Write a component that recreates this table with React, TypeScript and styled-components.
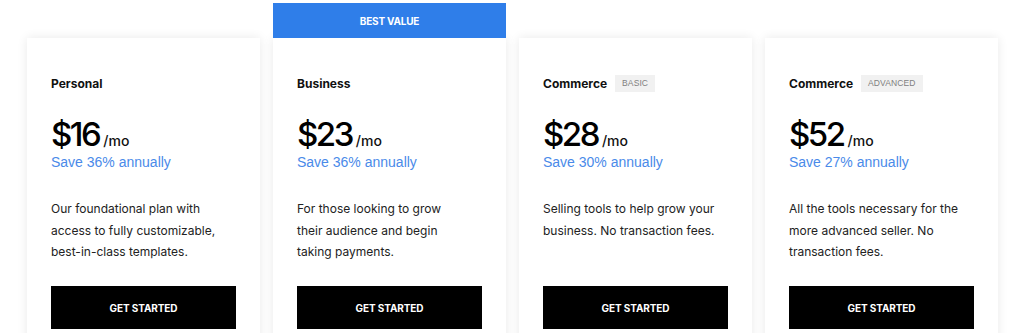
import React from "react";
import styled, { createGlobalStyle } from "styled-components";

const Global = createGlobalStyle`
  html, body { margin: 0; padding: 0; background: #fff; overflow: hidden; }
  body { font-family: Inter, "Liberation Sans", Arial, sans-serif; color: #111; }
`;

const Row = styled.div`
  display: flex;
  gap: 13px;
  padding: 38px 0 0 27px;
  height: 333px;
  box-sizing: border-box;
  overflow: hidden;
`;

const Card = styled.div`
  position: relative;
  width: 233px;
  height: 320px;
  flex: none;
  background: #fff;
  box-shadow: 0 0 10px rgba(0, 0, 0, 0.09);
  padding: 37px 24px 0;
  box-sizing: border-box;
  display: flex;
  flex-direction: column;
`;

const Ribbon = styled.div`
  position: absolute;
  left: 0;
  right: 0;
  bottom: 100%;
  height: 35px;
  background: #2f7ee9;
  color: #fff;
  font-size: 10px;
  font-weight: 700;
  display: flex;
  align-items: center;
  justify-content: center;
  letter-spacing: -0.2px;
`;

const NameRow = styled.div`
  display: flex;
  align-items: center;
  gap: 8px;
  height: 16px;
`;

const Name = styled.span`
  font-size: 12px;
  font-weight: 700;
  color: #111;
`;

const Tag = styled.span`
  background: #f1f1f1;
  color: #808080;
  font-size: 8.5px;
  font-family: "Liberation Sans", Arial, sans-serif;
  padding: 0 7px;
  height: 17px;
  line-height: 17px;
  letter-spacing: 0.1px;
`;

const PriceRow = styled.div`
  display: flex;
  align-items: baseline;
  margin-top: 23px;
  height: 39px;
`;

const Amount = styled.span`
  font-size: 33px;
  font-weight: 500;
  letter-spacing: -2.5px;
  color: #000;
`;

const Per = styled.span`
  font-size: 14px;
  font-weight: 500;
  margin-left: 4px;
  color: #111;
`;

const Save = styled.div`
  font-family: "Liberation Sans", Arial, sans-serif;
  font-size: 14px;
  color: #4a8ae9;
  line-height: 18px;
`;

const Desc = styled.p`
  margin: 27px 0 0;
  font-size: 12px;
  line-height: 21.5px;
  color: #222;
  height: 65px;
  white-space: pre-line;
`;

const Button = styled.button`
  margin-top: 23px;
  width: 185px;
  height: 43px;
  background: #000;
  color: #fff;
  border: 0;
  font-family: Inter, "Liberation Sans", Arial, sans-serif;
  font-size: 10px;
  font-weight: 700;
  letter-spacing: -0.1px;
  flex: none;
`;

type Plan = { name: string; tag?: string; price: string; save: string; desc: string; featured?: boolean };

const plans: Plan[] = [
  { name: "Personal", price: "$16", save: "Save 36% annually", desc: "Our foundational plan with\naccess to fully customizable,\nbest-in-class templates." },
  { name: "Business", price: "$23", save: "Save 36% annually", desc: "For those looking to grow\ntheir audience and begin\ntaking payments.", featured: true },
  { name: "Commerce", tag: "BASIC", price: "$28", save: "Save 30% annually", desc: "Selling tools to help grow your\nbusiness. No transaction fees." },
  { name: "Commerce", tag: "ADVANCED", price: "$52", save: "Save 27% annually", desc: "All the tools necessary for the\nmore advanced seller. No\ntransaction fees." },
];

export default function App() {
  return (
    <>
      <Global />
      <Row>
        {plans.map((p, i) => (
          <Card key={i}>
            {p.featured && <Ribbon>BEST VALUE</Ribbon>}
            <NameRow>
              <Name>{p.name}</Name>
              {p.tag && <Tag>{p.tag}</Tag>}
            </NameRow>
            <PriceRow>
              <Amount>{p.price}</Amount>
              <Per>/mo</Per>
            </PriceRow>
            <Save>{p.save}</Save>
            <Desc>{p.desc}</Desc>
            <Button>GET STARTED</Button>
          </Card>
        ))}
      </Row>
    </>
  );
}
